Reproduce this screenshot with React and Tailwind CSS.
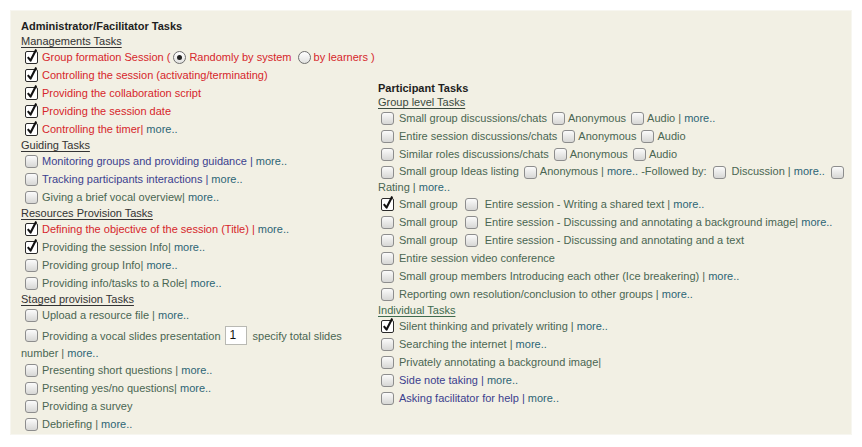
import React from 'react';

// Small task form: two columns of checkbox rows inside a beige panel

const Box = ({ checked = false, className = '' }) => {
  if (checked) {
    return (
      <span className={`inline-block align-middle w-[13px] h-[13px] relative shrink-0 ${className}`}>
        <svg width="15" height="16" viewBox="0 0 15 16" className="absolute left-0 -top-[3px]">
          <rect x="0.5" y="3.5" width="12" height="12" rx="1.5" fill="#fff" stroke="#2a2a2a" />
          <path d="M2.8 9.2 L5.6 12.6 L11.2 1.6" fill="none" stroke="#111" strokeWidth="2.1" strokeLinejoin="round" />
        </svg>
      </span>
    );
  }
  return (
    <span
      className={`inline-block align-middle w-[13px] h-[13px] shrink-0 rounded-[3px] border border-[#8d8d8d] bg-gradient-to-b from-[#fbfbfb] to-[#d7d7d5] ${className}`}
    />
  );
};

const Radio = ({ checked = false }) => (
  <span className="inline-flex items-center justify-center align-middle w-[13px] h-[13px] rounded-full border border-[#6f6f6f] bg-gradient-to-b from-white to-[#e2e2e0] mx-[3px]">
    {checked && <span className="w-[5px] h-[5px] rounded-full bg-[#222]" />}
  </span>
);

const More = () => <span className="text-[#2d6575]">more..</span>;

const colors = {
  red: 'text-[#d6262b]',
  green: 'text-[#4a6652]',
  blue: 'text-[#3b3f8e]',
};

const Row = ({ checked, color = 'green', children, inset = 'ml-[4px] mr-[4px]' }) => (
  <div className={`h-[18px] flex items-center whitespace-nowrap ${colors[color]}`}>
    <Box checked={checked} className={inset} />
    <span>{children}</span>
  </div>
);

const Heading = ({ children, color = 'text-[#333]' }) => (
  <div className={`h-[14px] leading-[14px] underline underline-offset-2 ${color}`}>{children}</div>
);

const leftGroups = [
  {
    title: 'Guiding Tasks',
    rows: [
      { color: 'blue', text: 'Monitoring groups and providing guidance | ', more: true },
      { color: 'blue', text: 'Tracking participants interactions | ', more: true },
      { text: 'Giving a brief vocal overview| ', more: true },
    ],
  },
  {
    title: 'Resources Provision Tasks',
    rows: [
      { checked: true, color: 'red', text: 'Defining the objective of the session (Title) | ', more: true },
      { checked: true, text: 'Providing the session Info| ', more: true },
      { text: 'Providing group Info| ', more: true },
      { text: 'Providing info/tasks to a Role| ', more: true },
    ],
  },
];

const InBox = ({ checked, className = 'mx-[3px]' }) => <Box checked={checked} className={className} />;

export default function App() {
  return (
    <div className="w-[862px] h-[447px] bg-white p-[10px] text-[11px] leading-[14px]" style={{ fontFamily: '"Liberation Sans", Arial, sans-serif' }}>
      <div className="h-[425px] bg-[#f2f0e4] border border-[#f7f6f0] pl-[10px] pt-[7px] flex items-start">
        {/* Administrator column */}
        <div className="w-[357px] shrink-0">
          <div className="h-[16px] leading-[16px] font-bold text-[#1e1e1e]">Administrator/Facilitator Tasks</div>
          <Heading>Managements Tasks</Heading>
          <Row checked color="red">
            Group formation Session (<Radio checked />Randomly by system <Radio />by learners )
          </Row>
          <Row checked color="red">Controlling the session (activating/terminating)</Row>
          <Row checked color="red">Providing the collaboration script</Row>
          <Row checked color="red">Providing the session date</Row>
          <Row checked color="red">
            Controlling the timer| <More />
          </Row>

          {leftGroups.map((g) => (
            <div key={g.title}>
              <Heading>{g.title}</Heading>
              {g.rows.map((r) => (
                <Row key={r.text} checked={r.checked} color={r.color}>
                  {r.text}
                  {r.more && <More />}
                </Row>
              ))}
            </div>
          ))}

          <Heading>Staged provision Tasks</Heading>
          <Row>
            Upload a resource file | <More />
          </Row>
          <div className={`${colors.green} pt-[1px]`}>
            <div className="h-[21px] flex items-center whitespace-nowrap">
              <Box className="ml-[4px] mr-[4px]" />
              Providing a vocal slides presentation
              <span className="inline-block ml-[4px] mr-[6px] w-[22px] h-[19px] border border-[#b9b9b3] bg-white text-[#111] text-[12px] leading-[17px] pl-[4px]">1</span>
              specify total slides
            </div>
            <div className="h-[15px] leading-[15px]">
              number | <More />
            </div>
          </div>
          <Row>
            Presenting short questions | <More />
          </Row>
          <Row>
            Prsenting yes/no questions| <More />
          </Row>
          <Row>Providing a survey</Row>
          <Row>
            Debriefing | <More />
          </Row>
        </div>

        {/* Participant column */}
        <div className="flex-1 min-w-0 pt-[63px]">
          <div className="h-[14px] leading-[14px] font-bold text-[#1e1e1e]">Participant Tasks</div>
          <Heading color="text-[#3a4a40]">Group level Tasks</Heading>
          <Row inset="ml-[3px] mr-[5px]">
            Small group discussions/chats
            <InBox className="ml-[5px] mr-[3px]" />
            Anonymous
            <InBox className="ml-[5px] mr-[3px]" />
            Audio | <More />
          </Row>
          <Row inset="ml-[3px] mr-[5px]">
            Entire session discussions/chats
            <InBox className="ml-[5px] mr-[3px]" />
            Anonymous
            <InBox className="ml-[5px] mr-[3px]" />
            Audio
          </Row>
          <Row inset="ml-[3px] mr-[5px]">
            Similar roles discussions/chats
            <InBox className="ml-[5px] mr-[3px]" />
            Anonymous
            <InBox className="ml-[5px] mr-[3px]" />
            Audio
          </Row>
          <div className={`${colors.green} leading-[16px]`}>
            <Box className="ml-[3px] mr-[5px]" />
            Small group Ideas listing
            <InBox className="ml-[5px] mr-[3px]" />
            Anonymous | <More /> -Followed by:
            <InBox className="ml-[6px] mr-[6px]" />
            Discussion | <More />
            <InBox className="ml-[6px] mr-[3px]" />
            <br />
            Rating | <More />
          </div>
          <Row checked inset="ml-[3px] mr-[5px]">
            Small group
            <InBox className="ml-[7px] mr-[7px]" />
            Entire session - Writing a shared text | <More />
          </Row>
          <Row inset="ml-[3px] mr-[5px]">
            Small group
            <InBox className="ml-[7px] mr-[7px]" />
            Entire session - Discussing and annotating a background image| <More />
          </Row>
          <Row inset="ml-[3px] mr-[5px]">
            Small group
            <InBox className="ml-[7px] mr-[7px]" />
            Entire session - Discussing and annotating and a text
          </Row>
          <Row inset="ml-[3px] mr-[5px]">Entire session video conference</Row>
          <Row inset="ml-[3px] mr-[5px]">
            Small group members Introducing each other (Ice breakering) | <More />
          </Row>
          <Row inset="ml-[3px] mr-[5px]">
            Reporting own resolution/conclusion to other groups | <More />
          </Row>
          <Heading color="text-[#3f6b4f]">Individual Tasks</Heading>
          <Row checked inset="ml-[3px] mr-[5px]">
            Silent thinking and privately writing | <More />
          </Row>
          <Row inset="ml-[3px] mr-[5px]">
            Searching the internet | <More />
          </Row>
          <Row inset="ml-[3px] mr-[5px]">Privately annotating a background image|</Row>
          <Row color="blue" inset="ml-[3px] mr-[5px]">
            Side note taking | <More />
          </Row>
          <Row color="blue" inset="ml-[3px] mr-[5px]">
            Asking facilitator for help | <More />
          </Row>
        </div>
      </div>
    </div>
  );
}
